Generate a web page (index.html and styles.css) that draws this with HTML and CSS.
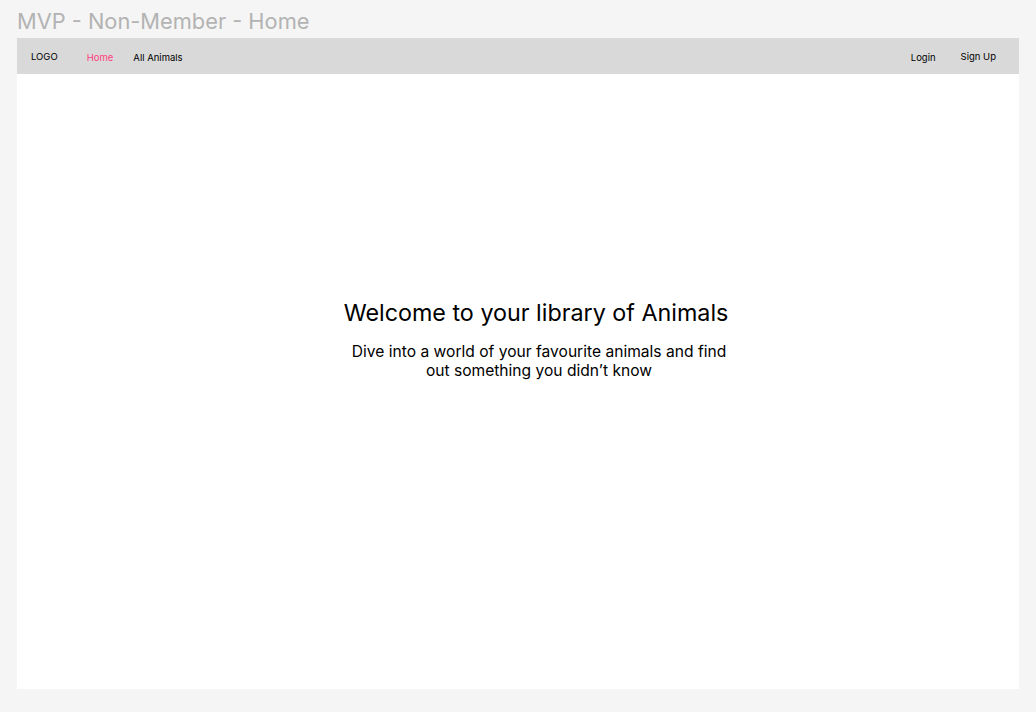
FILE: index.html
```html
<!DOCTYPE html>
<html>
<head>
<meta charset="utf-8">
<link rel="stylesheet" href="styles.css">
</head>
<body>
<div class="page-title">MVP - Non-Member - Home</div>
<div class="frame">
  <nav class="nav">
    <div class="nav-left">
      <span class="logo">LOGO</span>
      <a class="nav-link active">Home</a>
      <a class="nav-link">All Animals</a>
    </div>
    <div class="nav-right">
      <a class="nav-link">Login</a>
      <a class="nav-link">Sign Up</a>
    </div>
  </nav>
  <main class="hero">
    <h1 class="hero-title">Welcome to your library of Animals</h1>
    <p class="hero-sub">Dive into a world of your favourite animals and find out something you didn’t know</p>
  </main>
</div>
</body>
</html>
```
FILE: styles.css
```css
html, body {
  margin: 0;
  padding: 0;
}
body {
  background: #f5f5f5;
  font-family: Inter, "Noto Sans", sans-serif;
  width: 1036px;
  height: 712px;
  overflow: hidden;
}
.page-title {
  padding: 8px 0 0 17px;
  height: 38px;
  box-sizing: border-box;
  font-size: 21.8px;
  line-height: 26px;
  color: #b3b3b3;
}
.frame {
  margin-left: 17px;
  width: 1002px;
  height: 651px;
  background: #ffffff;
  display: flex;
  flex-direction: column;
}
.nav {
  height: 36px;
  box-sizing: border-box;
  flex-shrink: 0;
  background: #d9d9d9;
  display: flex;
  align-items: center;
  justify-content: space-between;
  padding: 2px 23px 0 14px;
  font-size: 9.5px;
  color: #000;
}
.nav-left, .nav-right {
  display: flex;
  align-items: center;
}
.logo {
  margin-right: 29px;
  position: relative;
  top: -1px;
}
.nav-link {
  margin-right: 20px;
  color: #000;
  text-decoration: none;
}
.nav-right .nav-link {
  margin-right: 0;
  margin-left: 25px;
}
.nav-right .nav-link:last-child {
  position: relative;
  top: -1px;
}
.nav-link.active {
  color: #ff3d7f;
}
.hero {
  display: flex;
  flex-direction: column;
  align-items: center;
  padding-top: 224px;
  padding-left: 36px;
}
.hero-title {
  margin: 0;
  font-size: 23.3px;
  font-weight: 400;
  line-height: 30px;
}
.hero-sub {
  margin: 14px 0 0 6px;
  width: 384px;
  text-align: center;
  font-size: 15.6px;
  line-height: 19px;
}
```
